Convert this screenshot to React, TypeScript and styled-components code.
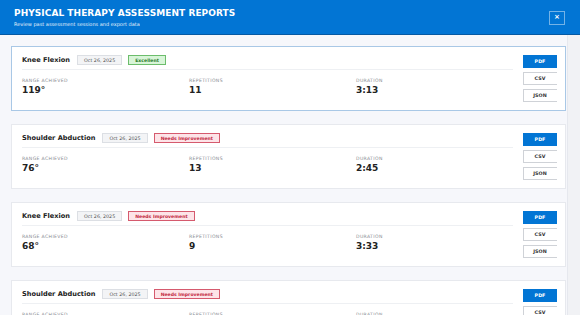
import React from 'react';
import styled, { createGlobalStyle } from 'styled-components';

const GlobalStyle = createGlobalStyle`
  html, body {
    margin: 0;
    padding: 0;
    height: 100%;
    overflow: hidden;
  }
  body {
    font-family: "DejaVu Sans", Verdana, sans-serif;
    background: #f6f7fb;
    color: #222;
  }
`;

const Shell = styled.div`
  width: 580px;
  height: 315px;
  display: flex;
  flex-direction: column;
`;

const Header = styled.header`
  flex: 0 0 auto;
  height: 35px;
  box-sizing: border-box;
  padding: 0 15px 0 14px;
  display: flex;
  align-items: center;
  justify-content: space-between;
  background: #0275d4;
  border-bottom: 1px solid #0559a3;
  color: white;
`;

const TitleBlock = styled.div`
  display: flex;
  flex-direction: column;
  gap: 2px;
  margin-top: 1px;
`;

const Title = styled.h1`
  margin: 0;
  font-size: 9px;
  font-weight: bold;
  letter-spacing: 0.05px;
  line-height: 11px;
`;

const Subtitle = styled.div`
  font-size: 5px;
  line-height: 6px;
  opacity: 0.9;
`;

const CloseButton = styled.button`
  width: 16px;
  height: 14px;
  margin-top: 1px;
  padding: 0;
  display: flex;
  align-items: center;
  justify-content: center;
  background: transparent;
  border: 1px solid rgba(255, 255, 255, 0.45);
  color: white;
  font-family: inherit;
  font-size: 7px;
  font-weight: bold;
  line-height: 1;
`;

const Body = styled.div`
  flex: 1 1 auto;
  display: flex;
  min-height: 0;
`;

const List = styled.div`
  flex: 1 1 auto;
  overflow: hidden;
  padding: 11px 1px 0 11px;
  display: flex;
  flex-direction: column;
  gap: 13px;
`;

const ScrollTrack = styled.div`
  flex: 0 0 12px;
  background: #f1f2f5;
  border-left: 1px solid #e6e8ee;
`;

const Card = styled.div<{ $active?: boolean }>`
  flex: 0 0 auto;
  height: 65px;
  box-sizing: border-box;
  display: flex;
  gap: 10px;
  padding: 8px 10px 8px 10px;
  background: white;
  border: 1px solid ${({ $active }) => ($active ? '#a9c8e6' : '#e7e9ee')};
`;

const Main = styled.div`
  flex: 1 1 auto;
  display: flex;
  flex-direction: column;
`;

const TitleRow = styled.div`
  display: flex;
  align-items: center;
  gap: 6px;
  height: 10px;
  padding-bottom: 4px;
  border-bottom: 1px solid #eef0f3;
`;

const CardTitle = styled.div`
  font-size: 6.6px;
  font-weight: bold;
  color: #222;
  margin-right: 1px;
`;

const DateBadge = styled.span`
  height: 10px;
  box-sizing: border-box;
  padding: 0 6px;
  display: inline-flex;
  align-items: center;
  font-size: 4.8px;
  color: #555;
  background: #f3f4f6;
  border: 1px solid #dcdfe4;
`;

const statusColors = {
  good: { bg: '#d8f5d8', border: '#6cbd6c', text: '#2b7a2b' },
  bad: { bg: '#fde4e8', border: '#d55a6e', text: '#c22a42' },
};

const StatusBadge = styled.span<{ $tone: 'good' | 'bad' }>`
  height: 10px;
  box-sizing: border-box;
  padding: 0 6px;
  display: inline-flex;
  align-items: center;
  font-size: 4.6px;
  font-weight: bold;
  color: ${({ $tone }) => statusColors[$tone].text};
  background: ${({ $tone }) => statusColors[$tone].bg};
  border: 1px solid ${({ $tone }) => statusColors[$tone].border};
`;

const Stats = styled.div`
  display: grid;
  grid-template-columns: repeat(3, 157px);
  column-gap: 10px;
  padding-top: 8px;
`;

const Stat = styled.div`
  display: flex;
  flex-direction: column;
  gap: 2px;
`;

const StatLabel = styled.div`
  font-size: 4.6px;
  letter-spacing: 0.35px;
  color: #8a8d93;
  text-transform: uppercase;
`;

const StatValue = styled.div`
  font-size: 9px;
  font-weight: bold;
  color: #222;
`;

const Actions = styled.div`
  flex: 0 0 34px;
  display: flex;
  flex-direction: column;
  gap: 4px;
  overflow: hidden;
`;

const ExportButton = styled.button<{ $primary?: boolean }>`
  width: 36px;
  height: 13px;
  flex: 0 0 auto;
  padding: 0 2px 0 0;
  font-family: inherit;
  font-size: 4.8px;
  font-weight: bold;
  color: ${({ $primary }) => ($primary ? 'white' : '#333')};
  background: ${({ $primary }) => ($primary ? '#0275d4' : 'white')};
  border: 1px solid ${({ $primary }) => ($primary ? '#0275d4' : '#cfd2d7')};
`;

type Report = {
  exercise: string;
  date: string;
  status: string;
  tone: 'good' | 'bad';
  range: string;
  reps: string;
  duration: string;
};

const reports: Report[] = [
  { exercise: 'Knee Flexion', date: 'Oct 26, 2025', status: 'Excellent', tone: 'good', range: '119°', reps: '11', duration: '3:13' },
  { exercise: 'Shoulder Abduction', date: 'Oct 26, 2025', status: 'Needs Improvement', tone: 'bad', range: '76°', reps: '13', duration: '2:45' },
  { exercise: 'Knee Flexion', date: 'Oct 26, 2025', status: 'Needs Improvement', tone: 'bad', range: '68°', reps: '9', duration: '3:33' },
  { exercise: 'Shoulder Abduction', date: 'Oct 26, 2025', status: 'Needs Improvement', tone: 'bad', range: '82°', reps: '12', duration: '2:58' },
];

const App = () => (
  <>
    <GlobalStyle />
    <Shell>
      <Header>
        <TitleBlock>
          <Title>PHYSICAL THERAPY ASSESSMENT REPORTS</Title>
          <Subtitle>Review past assessment sessions and export data</Subtitle>
        </TitleBlock>
        <CloseButton>×</CloseButton>
      </Header>
      <Body>
        <List>
          {reports.map((r, i) => (
            <Card key={i} $active={i === 0}>
              <Main>
                <TitleRow>
                  <CardTitle>{r.exercise}</CardTitle>
                  <DateBadge>{r.date}</DateBadge>
                  <StatusBadge $tone={r.tone}>{r.status}</StatusBadge>
                </TitleRow>
                <Stats>
                  <Stat>
                    <StatLabel>Range Achieved</StatLabel>
                    <StatValue>{r.range}</StatValue>
                  </Stat>
                  <Stat>
                    <StatLabel>Repetitions</StatLabel>
                    <StatValue>{r.reps}</StatValue>
                  </Stat>
                  <Stat>
                    <StatLabel>Duration</StatLabel>
                    <StatValue>{r.duration}</StatValue>
                  </Stat>
                </Stats>
              </Main>
              <Actions>
                <ExportButton $primary>PDF</ExportButton>
                <ExportButton>CSV</ExportButton>
                <ExportButton>JSON</ExportButton>
              </Actions>
            </Card>
          ))}
        </List>
        <ScrollTrack />
      </Body>
    </Shell>
  </>
);

export default App;
